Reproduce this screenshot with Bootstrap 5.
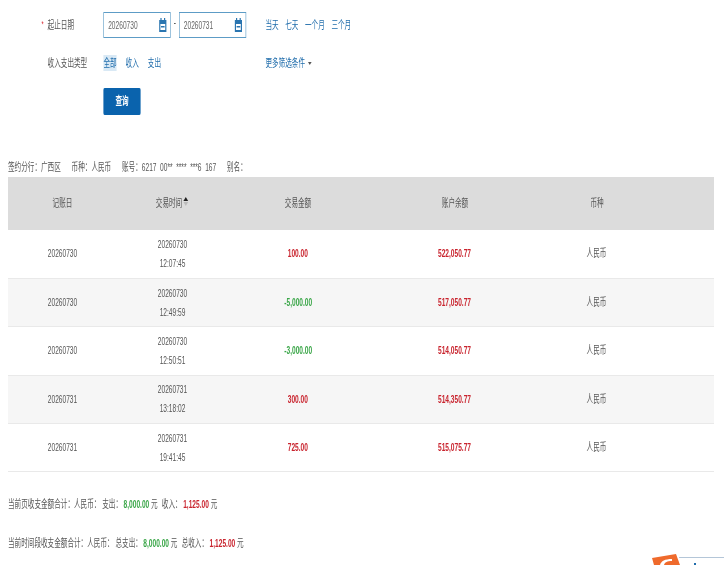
<!DOCTYPE html>
<html lang="zh-CN">
<head>
  <meta charset="UTF-8" />
  <meta name="viewport" content="width=device-width, initial-scale=1" />
  <title>交易明细</title>
  <link href="https://cdn.jsdelivr.net/npm/bootstrap@5.3.3/dist/css/bootstrap.min.css" rel="stylesheet" />
  <style>
    body {
      background: #fff;
      color: #555;
      font-family: "Liberation Sans", "Noto Sans CJK SC", sans-serif;
      font-size: 11px;
    }

    .page-wrap { padding: 12px 0 0 8px; filter: blur(0.3px); }

    /* the reference is squeezed horizontally */
    .squeeze-block {
      width: 700px;
      transform: scaleX(0.6);
      transform-origin: left top;
    }
    .squeeze-text { display: inline-block; transform: scaleX(0.6); }

    .form-line-one { height: 26px; padding-left: 56px; }
    .form-line-two { height: 18px; margin-top: 16px; padding-left: 56px; }
    .form-star { width: 10px; color: #d9232e; font-size: 9px; }
    .form-label-cell { width: 93px; }
    .date-box {
      width: 112px;
      height: 26px;
      padding: 0 5px 0 7px;
      border: 1px solid #5d9cc6;
      color: #666;
    }
    .date-sep { width: 14px; margin-top: -6px; text-align: center; }
    .quick-links { margin-left: 32px; gap: 11px; }
    .type-links { width: 270px; gap: 15px; }
    .blue-link { color: #1f6cab; text-decoration: none; }
    .type-active { background: #d9e9f5; }
    .more-caret {
      margin-left: 5px;
      border-top: 3px solid #555;
      border-left: 3px solid transparent;
      border-right: 3px solid transparent;
    }
    .search-btn {
      display: block;
      width: 62px;
      height: 27px;
      margin: 16px 0 0 159px;
      padding: 0;
      border: 0;
      border-radius: 2px;
      background: #0a63ad;
      color: #fff;
      font-size: 11px;
      font-weight: 700;
    }
    .info-line { height: 18px; margin-top: 44px; padding-bottom: 2px; gap: 18px; }
    .account-no { word-spacing: 3px; }

    .tx-table { width: 706px; margin: 0; table-layout: fixed; font-size: 11px; --bs-table-bg: transparent; }
    .tx-table th, .tx-table td {
      padding: 0;
      text-align: center;
      vertical-align: middle;
      color: #555;
      font-weight: 400;
      border-bottom: 1px solid #e9e9e9;
    }
    .tx-table thead tr { background: #dcdcdc; }
    .tx-table th { height: 53px; border-bottom: 0; }
    .tx-table td { height: 48.4px; line-height: 19px; }
    .tx-table .row-alt { background: #f6f6f6; }
    .tx-table td.amount-red, .sum-red { color: #c9252f; font-weight: 700; }
    .tx-table td.amount-green, .sum-green { color: #3aa648; font-weight: 700; }
    .sort-mark { display: inline-block; margin-left: 2px; vertical-align: 1px; }
    .sort-up, .sort-down {
      display: block;
      border-left: 4px solid transparent;
      border-right: 4px solid transparent;
    }
    .sort-up { border-bottom: 4px solid #222; margin-bottom: 1px; }
    .sort-down { border-top: 4px solid #bbb; }

    .sum-line { height: 18px; margin-top: 23px; line-height: 18px; }
    .sum-line + .sum-line { margin-top: 21px; }
    .sum-green, .sum-red { margin: 0 3px 0 2.5px; }
    .sum-unit { margin-right: 7px; }

    .float-logo {
      position: fixed;
      right: 0;
      bottom: 0;
      width: 72px;
      height: 11px;
      overflow: hidden;
    }
  </style>
</head>
<body>
<div class="page-wrap">
  <!-- 查询条件 -->
  <div class="squeeze-block">
    <div class="form-line-one d-flex align-items-center">
      <span class="form-star">*</span>
      <span class="form-label-cell">起止日期</span>
      <div class="date-box d-flex align-items-center justify-content-between">
        <span>20260730</span>
        <svg width="14" height="14" viewBox="0 0 14 14"><path fill="#2a75b0" d="M1 2h2V0h2v2h4V0h2v2h2v12H1zm2 4v6h8V6zm1 2h6v1.5H4z"/></svg>
      </div>
      <span class="date-sep">-</span>
      <div class="date-box d-flex align-items-center justify-content-between">
        <span>20260731</span>
        <svg width="14" height="14" viewBox="0 0 14 14"><path fill="#2a75b0" d="M1 2h2V0h2v2h4V0h2v2h2v12H1zm2 4v6h8V6zm1 2h6v1.5H4z"/></svg>
      </div>
      <div class="quick-links d-flex">
        <a class="blue-link" href="#">当天</a>
        <a class="blue-link" href="#">七天</a>
        <a class="blue-link" href="#">一个月</a>
        <a class="blue-link" href="#">三个月</a>
      </div>
    </div>

    <div class="form-line-two d-flex align-items-center">
      <span class="form-star"></span>
      <span class="form-label-cell">收入支出类型</span>
      <div class="type-links d-flex">
        <a class="blue-link type-active" href="#">全部</a>
        <a class="blue-link" href="#">收入</a>
        <a class="blue-link" href="#">支出</a>
      </div>
      <a class="blue-link" href="#">更多筛选条件</a>
      <span class="more-caret"></span>
    </div>

    <button class="search-btn" type="button">查询</button>

    <div class="info-line d-flex align-items-center">
      <span>签约分行：广西区</span>
      <span>币种：人民币</span>
      <span class="account-no">账号：6217 00** **** ***6 167</span>
      <span>别名：</span>
    </div>
  </div>

  <!-- 明细表 -->
  <table class="table tx-table">
    <colgroup>
      <col style="width: 109px" />
      <col style="width: 110px" />
      <col style="width: 142px" />
      <col style="width: 172px" />
      <col style="width: 111px" />
      <col style="width: 62px" />
    </colgroup>
    <thead>
      <tr>
        <th><span class="squeeze-text">记账日</span></th>
        <th><span class="squeeze-text">交易时间<span class="sort-mark"><span class="sort-up"></span><span class="sort-down"></span></span></span></th>
        <th><span class="squeeze-text">交易金额</span></th>
        <th><span class="squeeze-text">账户余额</span></th>
        <th><span class="squeeze-text">币种</span></th>
        <th></th>
      </tr>
    </thead>
    <tbody>
      <tr>
        <td><span class="squeeze-text">20260730</span></td>
        <td><span class="squeeze-text">20260730<br />12:07:45</span></td>
        <td class="amount-red"><span class="squeeze-text">100.00</span></td>
        <td class="amount-red"><span class="squeeze-text">522,050.77</span></td>
        <td><span class="squeeze-text">人民币</span></td>
        <td></td>
      </tr>
      <tr class="row-alt">
        <td><span class="squeeze-text">20260730</span></td>
        <td><span class="squeeze-text">20260730<br />12:49:59</span></td>
        <td class="amount-green"><span class="squeeze-text">-5,000.00</span></td>
        <td class="amount-red"><span class="squeeze-text">517,050.77</span></td>
        <td><span class="squeeze-text">人民币</span></td>
        <td></td>
      </tr>
      <tr>
        <td><span class="squeeze-text">20260730</span></td>
        <td><span class="squeeze-text">20260730<br />12:50:51</span></td>
        <td class="amount-green"><span class="squeeze-text">-3,000.00</span></td>
        <td class="amount-red"><span class="squeeze-text">514,050.77</span></td>
        <td><span class="squeeze-text">人民币</span></td>
        <td></td>
      </tr>
      <tr class="row-alt">
        <td><span class="squeeze-text">20260731</span></td>
        <td><span class="squeeze-text">20260731<br />13:18:02</span></td>
        <td class="amount-red"><span class="squeeze-text">300.00</span></td>
        <td class="amount-red"><span class="squeeze-text">514,350.77</span></td>
        <td><span class="squeeze-text">人民币</span></td>
        <td></td>
      </tr>
      <tr>
        <td><span class="squeeze-text">20260731</span></td>
        <td><span class="squeeze-text">20260731<br />19:41:45</span></td>
        <td class="amount-red"><span class="squeeze-text">725.00</span></td>
        <td class="amount-red"><span class="squeeze-text">515,075.77</span></td>
        <td><span class="squeeze-text">人民币</span></td>
        <td></td>
      </tr>
    </tbody>
  </table>

  <div class="squeeze-block">
    <div class="sum-line">当前页收支金额合计：人民币： 支出：<span class="sum-green">8,000.00</span><span class="sum-unit">元</span>收入：<span class="sum-red">1,125.00</span>元</div>
    <div class="sum-line">当前时间段收支金额合计：人民币： 总支出：<span class="sum-green">8,000.00</span><span class="sum-unit">元</span>总收入：<span class="sum-red">1,125.00</span>元</div>
  </div>
</div>

<!-- 右下角浮层 -->
<svg class="float-logo" viewBox="0 0 72 11">
  <path fill="#ef6a2c" d="M0 4 24 0l4 11H2z"/>
  <path fill="#fff" d="M8 11c1-4 5-6 12-6v2c-5 0-7 1-8 4z"/>
  <path fill="none" stroke="#b4c6d8" d="M27 3.5h45"/>
  <path fill="#1f6cab" d="M42 9h2v2h-2z"/>
</svg>
</body>
</html>
